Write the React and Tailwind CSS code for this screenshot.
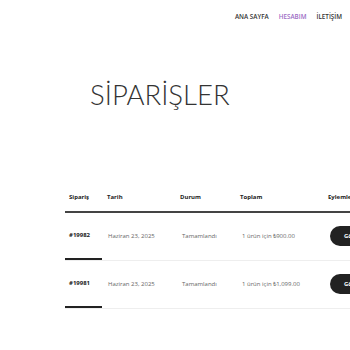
export default function App() {
  const orders = [
    { id: "#19982", date: "Haziran 23, 2025", status: "Tamamlandı", total: "1 ürün için ₺900.00" },
    { id: "#19981", date: "Haziran 23, 2025", status: "Tamamlandı", total: "1 ürün için ₺1,099.00" },
  ];

  return (
    <div className="w-[350px] h-[350px] overflow-hidden bg-white text-[#333]" style={{ fontFamily: '"Open Sans", sans-serif' }}>
      <nav className="flex justify-end gap-[10px] pt-[12px] pr-[8px] text-[6.3px] leading-[10px] font-semibold">
        <span>ANA SAYFA</span>
        <span className="text-[#9b6bc4]">HESABIM</span>
        <span>İLETİŞİM</span>
      </nav>

      <h1 className="ml-[90px] mt-[59px] text-[27.5px] font-light leading-none text-[#333]" style={{ fontFamily: 'Lato, sans-serif' }}>SİPARİŞLER</h1>

      <div className="ml-[65px] mt-[75px] w-[340px] text-[6px]">
        <div className="grid grid-cols-[37px_73px_60px_88px_1fr] h-[29px] items-center border-b-2 border-[#444] font-bold text-[#222]">
          <span className="pl-[4px]">Sipariş</span>
          <span className="pl-[5px]">Tarih</span>
          <span className="pl-[5px]">Durum</span>
          <span className="pl-[5px]">Toplam</span>
          <span className="pl-[5px]">Eylemler</span>
        </div>
        {orders.map((o) => (
          <div key={o.id} className="grid grid-cols-[37px_73px_60px_88px_1fr] h-[48px] items-center border-b border-[#eee]">
            <span className="pl-[4px] h-full flex items-center font-bold text-[#222] border-b-2 border-[#222] -mb-[1px]">{o.id}</span>
            <span className="pl-[6px] text-[#666]">{o.date}</span>
            <span className="pl-[7px] text-[#666]">{o.status}</span>
            <span className="pl-[7px] text-[#666]">{o.total}</span>
            <span className="pl-[7px]">
              <span className="inline-flex items-center h-[20px] px-[14px] rounded-full bg-[#222] text-white font-bold">Görüntüle</span>
            </span>
          </div>
        ))}
      </div>
    </div>
  );
}
